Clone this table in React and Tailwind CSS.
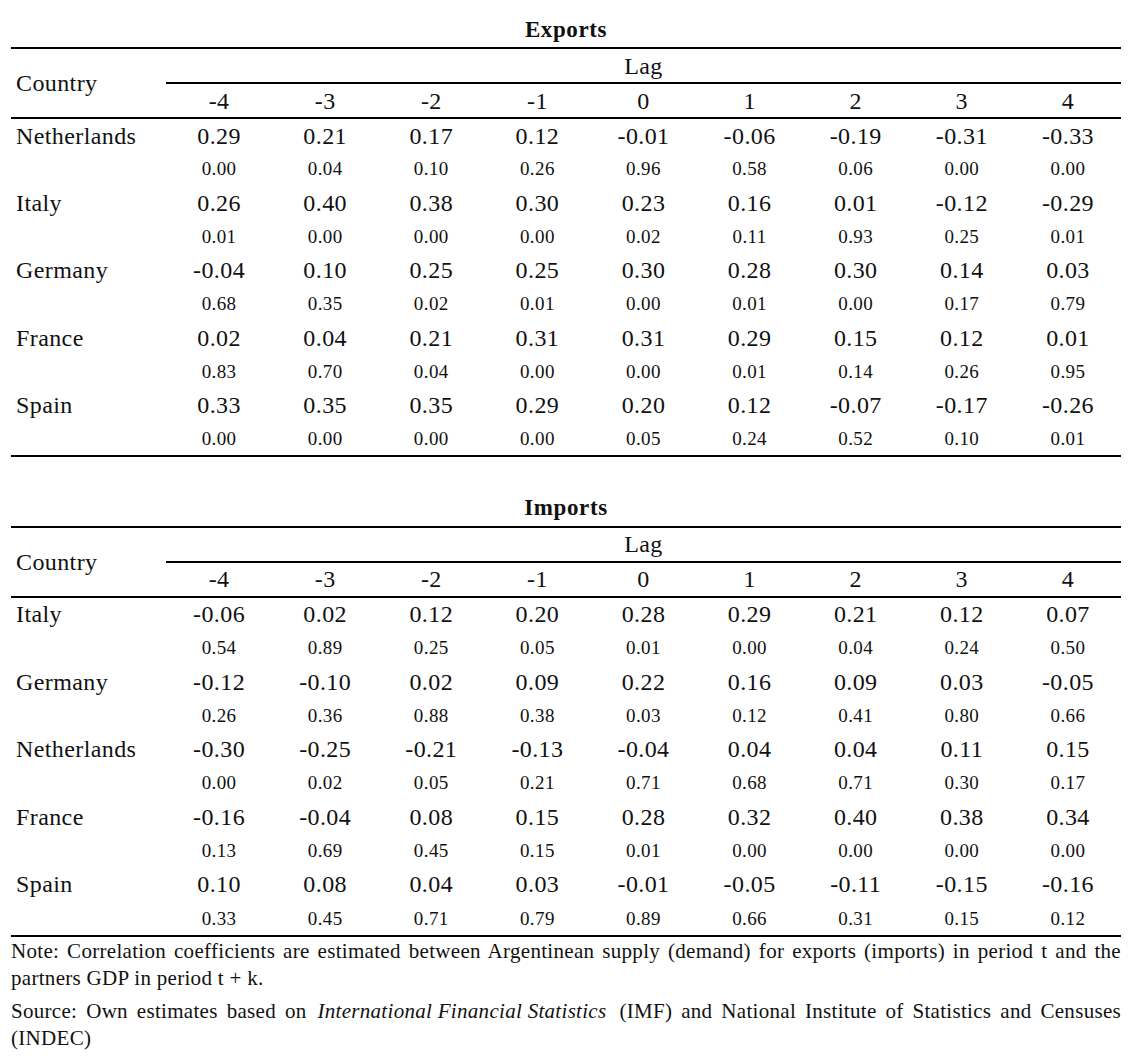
import React from 'react';

const lags = ['-4', '-3', '-2', '-1', '0', '1', '2', '3', '4'];

const exportsRows = [
    ['Netherlands', '0.29 0.21 0.17 0.12 -0.01 -0.06 -0.19 -0.31 -0.33', '0.00 0.04 0.10 0.26 0.96 0.58 0.06 0.00 0.00'],
    ['Italy', '0.26 0.40 0.38 0.30 0.23 0.16 0.01 -0.12 -0.29', '0.01 0.00 0.00 0.00 0.02 0.11 0.93 0.25 0.01'],
    ['Germany', '-0.04 0.10 0.25 0.25 0.30 0.28 0.30 0.14 0.03', '0.68 0.35 0.02 0.01 0.00 0.01 0.00 0.17 0.79'],
    ['France', '0.02 0.04 0.21 0.31 0.31 0.29 0.15 0.12 0.01', '0.83 0.70 0.04 0.00 0.00 0.01 0.14 0.26 0.95'],
    ['Spain', '0.33 0.35 0.35 0.29 0.20 0.12 -0.07 -0.17 -0.26', '0.00 0.00 0.00 0.00 0.05 0.24 0.52 0.10 0.01'],
];

const importsRows = [
    ['Italy', '-0.06 0.02 0.12 0.20 0.28 0.29 0.21 0.12 0.07', '0.54 0.89 0.25 0.05 0.01 0.00 0.04 0.24 0.50'],
    ['Germany', '-0.12 -0.10 0.02 0.09 0.22 0.16 0.09 0.03 -0.05', '0.26 0.36 0.88 0.38 0.03 0.12 0.41 0.80 0.66'],
    ['Netherlands', '-0.30 -0.25 -0.21 -0.13 -0.04 0.04 0.04 0.11 0.15', '0.00 0.02 0.05 0.21 0.71 0.68 0.71 0.30 0.17'],
    ['France', '-0.16 -0.04 0.08 0.15 0.28 0.32 0.40 0.38 0.34', '0.13 0.69 0.45 0.15 0.01 0.00 0.00 0.00 0.00'],
    ['Spain', '0.10 0.08 0.04 0.03 -0.01 -0.05 -0.11 -0.15 -0.16', '0.33 0.45 0.71 0.79 0.89 0.66 0.31 0.15 0.12'],
];

const CorrTable = ({ title, rows, last }) => (
    <div>
        <div className="h-[30px] mb-[3px] flex items-center justify-center text-[23px] tracking-[0.6px] font-bold">
            {title}
        </div>
        <table className={`w-full table-fixed border-collapse ${last ? '' : 'border-b-2 border-black'}`}>
            <colgroup>
                <col className="w-[155px]" />
                {lags.map((l) => <col key={l} />)}
            </colgroup>
            <thead>
                <tr className="border-t-2 border-black h-[35px]">
                    <th rowSpan={2} className="text-left font-normal pl-[5px] align-middle">Country</th>
                    <th colSpan={9} className="font-normal border-b-2 border-black text-center">Lag</th>
                </tr>
                <tr className="h-[35px] border-b-2 border-black">
                    {lags.map((l) => (
                        <th key={l} className="font-normal text-center">{l}</th>
                    ))}
                </tr>
            </thead>
            <tbody>
                {rows.map(([name, main, sub]) => (
                    <React.Fragment key={name}>
                        <tr className="h-[34px]">
                            <td className="pl-[5px]">{name}</td>
                            {main.split(' ').map((v, i) => (
                                <td key={i} className="text-center">{v}</td>
                            ))}
                        </tr>
                        <tr className="h-[33.6px] text-[19px]">
                            <td></td>
                            {sub.split(' ').map((v, i) => (
                                <td key={i} className="text-center">{v}</td>
                            ))}
                        </tr>
                    </React.Fragment>
                ))}
            </tbody>
        </table>
    </div>
);

export default function App() {
    return (
        <div className="bg-white text-[#111] min-h-[1059px] pl-[11px] pr-[13px] pt-[14px] font-['Liberation_Serif',serif] text-[24px] tracking-[0.4px] leading-none">
            <CorrTable title="Exports" rows={exportsRows} />
            <div className="mt-[36px]">
                <CorrTable title="Imports" rows={importsRows} last />
            </div>
            <div className="border-t-2 border-black pt-[1px] text-[21px] tracking-[0.3px] leading-[27px] text-justify">
                <p>
                    Note: Correlation coefficients are estimated between Argentinean supply (demand) for exports (imports) in period t and the partners GDP in period t + k.
                </p>
                <p className="mt-[6px]">
                    Source: Own estimates based on <i className="inline-block pl-[2px] pr-[4px]">International Financial Statistics</i> (IMF) and National Institute of Statistics and Censuses (INDEC)
                </p>
            </div>
        </div>
    );
}
